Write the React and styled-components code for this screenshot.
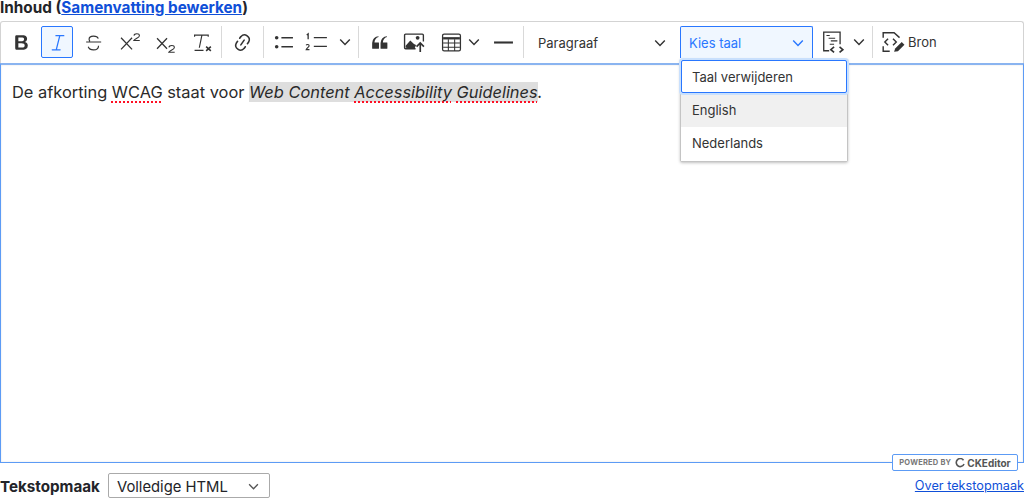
import styled, { createGlobalStyle } from 'styled-components'

const GlobalStyle = createGlobalStyle`
    html, body {
        margin: 0;
        padding: 0;
        background: #fff;
        font-family: Inter, "Liberation Sans", Arial, sans-serif;
        color: #333;
    }
    * { box-sizing: border-box; }
`
const Page = styled.div`
    width: 1024px;
    height: 499px;
    overflow: hidden;
    display: flex;
    flex-direction: column;
`
const FieldLabel = styled.div`
    height: 21px;
    font-size: 15.3px;
    line-height: 15px;
    font-weight: bold;
    color: #232429;
`
const BlueLink = styled.a`
    color: #0f4fd8;
    text-decoration: underline;
`
const Toolbar = styled.div`
    height: 42px;
    display: flex;
    align-items: center;
    padding: 0 4px 1px;
    border: 1px solid #d3d3d3;
    border-bottom: 0;
    border-radius: 3px 3px 0 0;
`
const IconButton = styled.div`
    width: ${props => props.width || '32px'};
    height: 32px;
    flex: none;
    margin-right: ${props => props.gap || '4px'};
    display: flex;
    align-items: center;
    justify-content: center;
    border-radius: 2px;
    color: ${props => props.active ? '#2977ff' : '#333'};
    background: ${props => props.active ? '#f0f7ff' : 'transparent'};
    border: 1px solid ${props => props.active ? '#2977ff' : 'transparent'};
`
const Separator = styled.div`
    width: 1px;
    height: 32px;
    flex: none;
    margin: 0 ${props => props.right || '4px'} 0 ${props => props.left || '4px'};
    background: #d9d9d9;
`
const Dropdown = styled.div`
    width: ${props => props.width};
    height: 32px;
    flex: none;
    position: relative;
    margin-right: ${props => props.gap || '0'};
    display: flex;
    align-items: center;
    justify-content: space-between;
    padding: 0 8px;
    font-size: 13px;
    border-radius: 2px 2px 0 0;
    color: ${props => props.active ? '#2977ff' : '#333'};
    background: ${props => props.active ? '#f0f7ff' : 'transparent'};
    border: 1px solid ${props => props.active ? '#2977ff' : 'transparent'};
    border-bottom: 0;
`
const LanguageMenu = styled.div`
    position: absolute;
    top: 32px;
    left: -1px;
    width: 168px;
    background: #fff;
    color: #333;
    border: 1px solid #c4c4c4;
    border-radius: 0 0 2px 2px;
    box-shadow: 0 1px 3px rgba(0, 0, 0, 0.25);
    z-index: 5;
`
const MenuItem = styled.div`
    height: 34px;
    display: flex;
    align-items: center;
    padding-left: 11px;
    padding-bottom: ${props => props.hovered ? '0' : '2px'};
    font-size: 13px;
    background: ${props => props.hovered ? '#f0f0f0' : '#fff'};
`
const FocusedItem = styled(MenuItem)`
    height: 33px;
    padding-bottom: 0;
    border: 1px solid #2977ff;
    box-shadow: 0 0 0 2px #c9e0fd;
    border-radius: 2px;
    position: relative;
    padding-left: 10px;
`
const SourceButton = styled.div`
    display: flex;
    align-items: center;
    gap: 3px;
    font-size: 13px;
    padding-left: 3px;
`
const Editor = styled.div`
    height: 400px;
    flex: none;
    position: relative;
    border: 1px solid #5c9bf5;
    border-top: 2px solid #8ab4f0;
    box-shadow: 0 0 2px rgba(0, 0, 0, 0.12) inset;
    padding: 16px 11px;
    font-size: 16.4px;
    line-height: 22px;
    color: #2a2a2a;
`
const SpellError = styled.span`
    text-decoration: underline dotted #ff1024;
    text-decoration-thickness: 1.5px;
    text-underline-offset: 3px;
`
const LangMark = styled.em`
    background: #dedede;
`
const PoweredBy = styled.div`
    position: absolute;
    right: 5px;
    bottom: -9px;
    width: 126px;
    height: 17px;
    display: flex;
    align-items: center;
    justify-content: center;
    gap: 4px;
    background: #fff;
    border: 1px solid #5c9bf5;
    border-radius: 2px;
    color: #777;
    font-size: 7.5px;
    font-weight: bold;
    letter-spacing: 0.2px;
`
const PoweredName = styled.span`
    display: flex;
    align-items: center;
    gap: 2px;
    color: #555;
    font-size: 10px;
    letter-spacing: 0;
`
const Footer = styled.div`
    flex: 1;
    display: flex;
    align-items: center;
    justify-content: space-between;
    padding: 9px 0 0;
`
const FormatGroup = styled.div`
    display: flex;
    align-items: center;
    gap: 8px;
`
const FormatLabel = styled.span`
    padding-top: 2px;
    font-size: 15.2px;
    font-weight: bold;
    color: #232429;
`
const FormatSelect = styled.div`
    width: 162px;
    height: 25px;
    display: flex;
    align-items: center;
    justify-content: space-between;
    padding: 2px 10px 0 8px;
    border: 1px solid #aaa;
    border-radius: 2px;
    font-size: 14.8px;
    color: #232429;
`
const AboutLink = styled(BlueLink)`
    font-size: 12.7px;
`

const Chevron = ({ color = 'currentColor', size = 12 }) => (
    <svg width={size} height={size} viewBox="0 0 10 10">
        <path d="M1 3l4 4 4-4" fill="none" stroke={color} strokeWidth="1.200" />
    </svg>
)
const Svg = ({ children, size = 21 }) => (
    <svg width={size} height={size} viewBox="0 0 20 20" fill="none" stroke="currentColor">
        {children}
    </svg>
)
const BoldIcon = () => (
    <Svg><path d="M10.187 17H5.773c-.637 0-1.092-.138-1.364-.415-.273-.277-.409-.718-.409-1.323V4.738c0-.617.14-1.062.419-1.332.279-.27.73-.406 1.354-.406h4.68c.69 0 1.288.041 1.793.124.506.083.96.242 1.36.478.341.197.644.447.906.75a3.262 3.262 0 0 1 .808 2.162c0 1.401-.722 2.426-2.167 3.075C15.05 10.175 16 11.315 16 13.01a3.756 3.756 0 0 1-2.296 3.504 6.1 6.1 0 0 1-1.517.377c-.571.073-1.238.11-2 .11zm-.217-6.217H7v4.087h3.069c1.977 0 2.965-.69 2.965-2.072 0-.707-.256-1.22-.768-1.537-.512-.319-1.277-.478-2.296-.478zM7 5.13v3.619h2.606c.729 0 1.292-.067 1.69-.2a1.6 1.6 0 0 0 .91-.765c.165-.267.247-.566.247-.897 0-.707-.26-1.176-.778-1.409-.519-.232-1.31-.348-2.375-.348H7z" fill="currentColor" stroke="none" /></Svg>
)
const ItalicIcon = () => (
    <Svg><path d="M8.500 3.500h7.500M5 17h7.500M12.200 3.500L8.800 17" strokeWidth="1.200" strokeLinecap="round" /></Svg>
)
const StrikeIcon = () => (
    <Svg><path d="M3 9.500h14.300M14.500 6.300C14 4.800 12.300 4 10 4 7.500 4 5.800 5.100 5.800 7c0 .8.3 1.400.8 1.900M14.800 13c0 2.400-2 4-4.800 4-2.500 0-4.400-1.200-5-3" strokeWidth="1.100" /></Svg>
)
const SuperIcon = () => (
    <Svg><path d="M1 5.500l10.500 11M11.500 5.500L1 16.500" strokeWidth="1.200" /><path d="M13.300 3.500c.3-2.500 5.200-2.500 5.200 0 0 2-3.800 2.500-5.200 4.500h5.500" strokeWidth="1" /></Svg>
)
const SubIcon = () => (
    <Svg><path d="M1 6l9.500 10M10.500 6L1 16" strokeWidth="1.200" /><path d="M12.300 14.700c.3-2.500 5.200-2.500 5.200 0 0 2-3.800 2.500-5.200 4.500h5.500" strokeWidth="1" /></Svg>
)
const ClearIcon = () => (
    <Svg><path d="M1.500 4.500V3h13v1.500M8.500 3L6 15M1.500 17.500h8.500" strokeWidth="1.100" /><path d="M12.500 14l4.500 4M17 14l-4.500 4" strokeWidth="1.500" /></Svg>
)
const LinkIcon = () => (
    <Svg><path d="m11.077 15 .991-1.416a.75.75 0 1 1 1.229.86l-1.148 1.64a.748.748 0 0 1-.217.206 5.251 5.251 0 0 1-8.503-5.955.741.741 0 0 1 .12-.274l1.147-1.639a.75.75 0 1 1 1.228.86L4.933 10.700l.006.003a3.750 3.750 0 0 0 6.132 4.294l.006.004zm5.494-5.335a.748.748 0 0 1-.12.274l-1.147 1.639a.75.75 0 1 1-1.228-.86l.86-1.230a3.750 3.750 0 0 0-6.144-4.301l-.86 1.229a.75.75 0 0 1-1.229-.86l1.148-1.640a.748.748 0 0 1 .217-.206 5.251 5.251 0 0 1 8.503 5.955zm-4.563-2.532a.75.75 0 0 1 .184 1.045l-3.155 4.505a.75.75 0 1 1-1.229-.86l3.155-4.506a.75.75 0 0 1 1.045-.184z" fill="currentColor" stroke="none" /></Svg>
)
const BulletIcon = () => (
    <Svg><circle cx="3.500" cy="5.500" r="1.700" fill="currentColor" stroke="none" /><circle cx="3.500" cy="14" r="1.700" fill="currentColor" stroke="none" /><path d="M8 5.500h11M8 14h11" strokeWidth="1.300" /></Svg>
)
const NumberedIcon = () => (
    <svg width="24" height="22" viewBox="0 0 22 20" fill="none" stroke="currentColor">
        <path d="M2.500 3.500l1.300-1v5M9 6h12M9 14h12" strokeWidth="1.200" />
        <path d="M2 12c.3-1 2.700-1 2.700.4 0 1-2 1.800-2.700 3.600h3" strokeWidth="1" transform="translate(0 1)" />
    </svg>
)
const QuoteIcon = () => (
    <Svg><path d="M3 10.423a6.500 6.500 0 0 1 6.056-6.408l.038.67C6.448 5.423 5.354 7.663 5.220 10H9c.552 0 .5.432.5.986v4.511c0 .554-.448.503-1 .503h-5c-.552 0-.5-.449-.5-1.003v-4.574zm8 0a6.500 6.500 0 0 1 6.056-6.408l.038.67c-2.646.739-3.740 2.979-3.874 5.315H17c.552 0 .5.432.5.986v4.511c0 .554-.448.503-1 .503h-5c-.552 0-.5-.449-.5-1.003v-4.574z" fill="currentColor" stroke="none" /></Svg>
)
const ImageIcon = () => (
    <svg width="23" height="21" viewBox="0 0 22 20" fill="none" stroke="currentColor">
        <path d="M12 16H2.500a1 1 0 0 1-1-1V3a1 1 0 0 1 1-1h16a1 1 0 0 1 1 1v6" strokeWidth="1.300" />
        <path d="M2.500 15v-2l4.500-5 3.500 3.500 2 1L11 16z" fill="currentColor" stroke="none" />
        <circle cx="14" cy="5.500" r="1.800" fill="currentColor" stroke="none" />
        <path d="M16.500 19v-8M13 14l3.500-3.500L20 14" strokeWidth="1.600" />
    </svg>
)
const TableIcon = () => (
    <Svg><rect x="1.500" y="2" width="17" height="16" rx="1.500" strokeWidth="1.200" /><path d="M2 6h16" strokeWidth="2.200" /><path d="M2 10.500h16M2 14.500h16M7 7v11M13 7v11" strokeWidth="1" /></Svg>
)
const DashIcon = () => (
    <Svg><path d="M1 10h18" strokeWidth="2" /></Svg>
)
const SnippetIcon = () => (
    <svg width="24" height="24" viewBox="0 0 22 22" fill="none" stroke="currentColor">
        <path d="M2.500 12V2h15v11M2.500 12v7h5" strokeWidth="1.200" />
        <path d="M5 5h3M7 7.500h6M9 10h6M8 13h4" strokeWidth="1" />
        <path d="M12 15.500l-3 2.500 3 2.500M17 15.500l3 2.500-3 2.500" strokeWidth="1.500" />
    </svg>
)
const SourceIcon = () => (
    <svg width="24" height="24" viewBox="0 0 22 22" fill="none" stroke="currentColor">
        <path d="M2 7V2.500h10l5 4.500M2 15v4.500h6" strokeWidth="1.300" />
        <path d="M6.500 8l-3 3 3 3M11 8l3 3-3 3" strokeWidth="1.300" />
        <path d="M12 20l1-3 6-6 2.500 2.500-6 6z" fill="currentColor" stroke="none" />
    </svg>
)
const CkLogo = () => (
    <svg width="10" height="10" viewBox="0 0 10 10" fill="none">
        <path d="M8.500 2.200A4 4 0 1 0 9 6" stroke="#555" strokeWidth="1.600" />
    </svg>
)

const App = () => {
    return (
        <Page>
            <GlobalStyle />
            <FieldLabel>Inhoud (<BlueLink href="#">Samenvatting bewerken</BlueLink>)</FieldLabel>
            <Toolbar>
                <IconButton><BoldIcon /></IconButton>
                <IconButton active><ItalicIcon /></IconButton>
                <IconButton gap="5px"><StrikeIcon /></IconButton>
                <IconButton><SuperIcon /></IconButton>
                <IconButton gap="5px"><SubIcon /></IconButton>
                <IconButton gap="0"><ClearIcon /></IconButton>
                <Separator left="2px" />
                <IconButton gap="0"><LinkIcon /></IconButton>
                <Separator left="5px" right="3px" />
                <IconButton gap="1px"><BulletIcon /></IconButton>
                <IconButton width="32px" gap="0"><NumberedIcon /></IconButton>
                <IconButton width="25px" gap="0"><Chevron /></IconButton>
                <Separator right="4px" left="1px" />
                <IconButton gap="3px"><QuoteIcon /></IconButton>
                <IconButton gap="5px"><ImageIcon /></IconButton>
                <IconButton gap="0"><TableIcon /></IconButton>
                <IconButton width="14px" gap="6px"><Chevron /></IconButton>
                <IconButton gap="1px"><DashIcon /></IconButton>
                <Separator right="5px" left="3px" />
                <Dropdown width="146px" gap="5px">Paragraaf<Chevron /></Dropdown>
                <Dropdown width="133px" gap="4px" active>
                    Kies taal<Chevron />
                    <LanguageMenu>
                        <FocusedItem>Taal verwijderen</FocusedItem>
                        <MenuItem hovered>English</MenuItem>
                        <MenuItem>Nederlands</MenuItem>
                    </LanguageMenu>
                </Dropdown>
                <IconButton gap="0"><SnippetIcon /></IconButton>
                <IconButton width="20px" gap="0"><Chevron /></IconButton>
                <Separator left="3px" right="5px" />
                <SourceButton><SourceIcon />Bron</SourceButton>
            </Toolbar>
            <Editor>
                De afkorting <SpellError>WCAG</SpellError> staat voor <LangMark>Web Content <SpellError>Accessibility</SpellError> <SpellError>Guidelines</SpellError></LangMark><em>.</em>
                <PoweredBy>POWERED BY <PoweredName><CkLogo />CKEditor</PoweredName></PoweredBy>
            </Editor>
            <Footer>
                <FormatGroup>
                    <FormatLabel>Tekstopmaak</FormatLabel>
                    <FormatSelect>Volledige HTML<Chevron color="#555" size={11} /></FormatSelect>
                </FormatGroup>
                <AboutLink href="#">Over tekstopmaak</AboutLink>
            </Footer>
        </Page>
    )
}

export default App
